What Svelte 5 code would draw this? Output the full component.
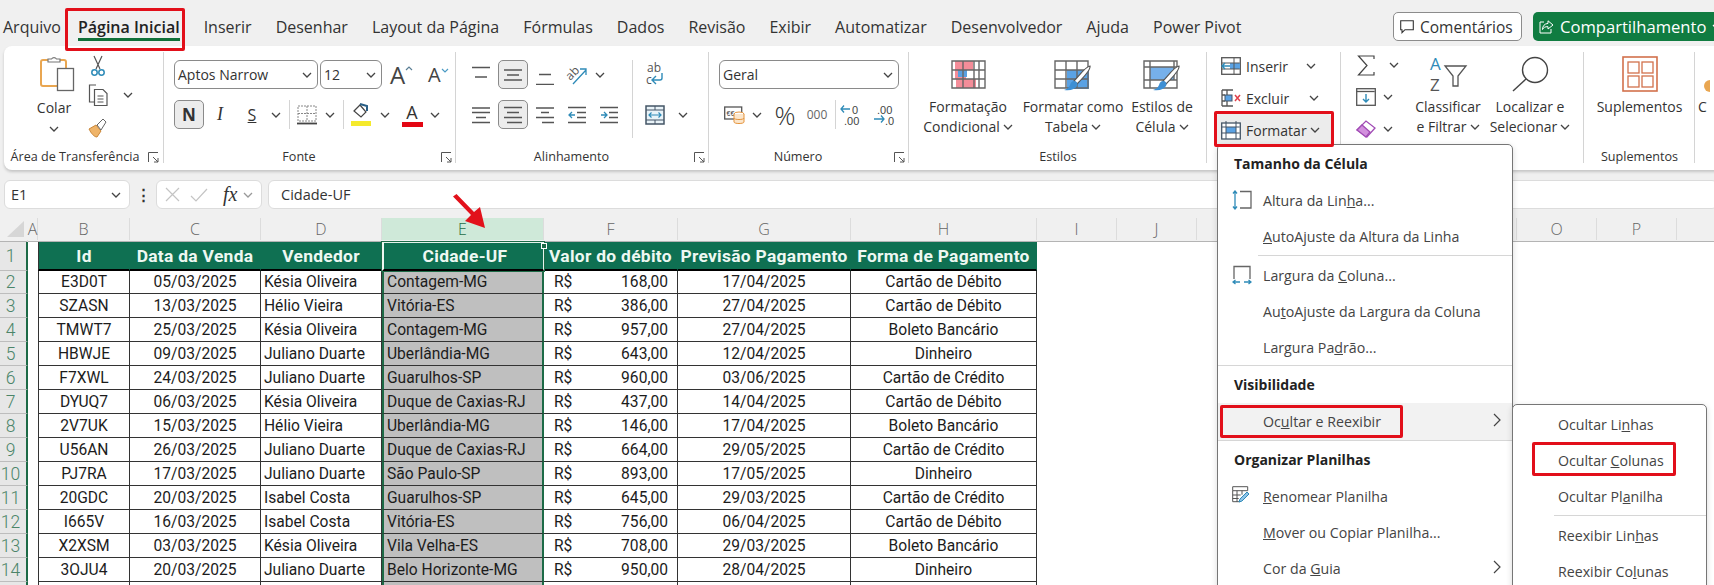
<script>
const tabs = ['Arquivo', 'Página Inicial', 'Inserir', 'Desenhar', 'Layout da Página', 'Fórmulas', 'Dados', 'Revisão', 'Exibir', 'Automatizar', 'Desenvolvedor', 'Ajuda', 'Power Pivot']
// K to N sit under the open menu
const letters = ['A', 'B', 'C', 'D', 'E', 'F', 'G', 'H', 'I', 'J', '', '', '', '', 'O', 'P', 'Q']
const heads = ['Id', 'Data da Venda', 'Vendedor', 'Cidade-UF', 'Valor do débito', 'Previsão Pagamento', 'Forma de Pagamento']
const rows = [
  ['E3D0T', '05/03/2025', 'Késia Oliveira', 'Contagem-MG', '168,00', '17/04/2025', 'Cartão de Débito'],
  ['SZASN', '13/03/2025', 'Hélio Vieira', 'Vitória-ES', '386,00', '27/04/2025', 'Cartão de Débito'],
  ['TMWT7', '25/03/2025', 'Késia Oliveira', 'Contagem-MG', '957,00', '27/04/2025', 'Boleto Bancário'],
  ['HBWJE', '09/03/2025', 'Juliano Duarte', 'Uberlândia-MG', '643,00', '12/04/2025', 'Dinheiro'],
  ['F7XWL', '24/03/2025', 'Juliano Duarte', 'Guarulhos-SP', '960,00', '03/06/2025', 'Cartão de Crédito'],
  ['DYUQ7', '06/03/2025', 'Késia Oliveira', 'Duque de Caxias-RJ', '437,00', '14/04/2025', 'Cartão de Débito'],
  ['2V7UK', '15/03/2025', 'Hélio Vieira', 'Uberlândia-MG', '146,00', '17/04/2025', 'Boleto Bancário'],
  ['U56AN', '26/03/2025', 'Juliano Duarte', 'Duque de Caxias-RJ', '664,00', '29/05/2025', 'Cartão de Crédito'],
  ['PJ7RA', '17/03/2025', 'Juliano Duarte', 'São Paulo-SP', '893,00', '17/05/2025', 'Dinheiro'],
  ['20GDC', '20/03/2025', 'Isabel Costa', 'Guarulhos-SP', '645,00', '29/03/2025', 'Cartão de Crédito'],
  ['I665V', '16/03/2025', 'Isabel Costa', 'Vitória-ES', '756,00', '06/04/2025', 'Cartão de Débito'],
  ['X2XSM', '03/03/2025', 'Késia Oliveira', 'Vila Velha-ES', '708,00', '29/03/2025', 'Boleto Bancário'],
  ['3OJU4', '20/03/2025', 'Juliano Duarte', 'Belo Horizonte-MG', '950,00', '28/04/2025', 'Dinheiro'],
]
</script>

{#snippet chev()}
  <svg class="chev" width="10" height="6" viewBox="0 0 10 6"><path d="M1 1l4 4 4-4" fill="none" stroke="#444" stroke-width="1.3"/></svg>
{/snippet}
{#snippet launcher()}
  <svg class="launch" width="11" height="11" viewBox="0 0 11 11"><path d="M.5 10V.5H10M5 5l5 5M10 6v4H6" fill="none" stroke="#555" stroke-width="1"/></svg>
{/snippet}
{#snippet lines(a, b, c, d)}
  <svg width="18" height="18" viewBox="0 0 18 18"><path d="M0 {a}h18M{b} 6.500h{18 - 2 * b}M{c} 11.500h{18 - 2 * c}M{d} 16.500h{18 - d}" stroke="#555" stroke-width="1.4"/></svg>
{/snippet}

<div class="page">
  <div class="tabs">
    {#each tabs as t, i}
      <span class="tab" class:on={i === 1}>{t}</span>
    {/each}
    <div class="actions">
      <button class="comments">
        <svg width="14" height="14" viewBox="0 0 14 14"><path d="M.7.7h12.600v9H5l-3 3v-3H.7z" fill="none" stroke="#333" stroke-width="1.100"/></svg>
        Comentários
      </button>
      <button class="share">
        <svg width="15" height="14" viewBox="0 0 15 14"><path d="M9 .8l5 4.200-5 4V6.700C6 6.500 4.500 7.500 3.500 9.500 3.500 6 5.500 3.700 9 3.400zM5 2H1v11h11V9" fill="none" stroke="#fff" stroke-width="1"/></svg>
        Compartilhamento
        {@render chev()}
      </button>
    </div>
  </div>

  <div class="ribbon">
    <section class="g g1">
      <div class="body clip">
        <div class="paste">
          <svg width="36" height="37" viewBox="0 0 36 37">
            <rect x="1" y="5" width="25" height="26" rx="2" fill="#fff" stroke="#e9a651" stroke-width="2"/>
            <path d="M8 7V4h3.500a3 3 0 0 1 5 0H20v3z" fill="#fff" stroke="#777" stroke-width="1.200"/>
            <rect x="17.500" y="13.500" width="16" height="22" fill="#fff" stroke="#666" stroke-width="1.300"/>
          </svg>
          <span>Colar</span>
          {@render chev()}
        </div>
        <div class="tools">
          <div class="tool scissors">
            <svg width="14" height="22" viewBox="0 0 14 22"><path d="M3 1l6 13M11 1L5 14" stroke="#555" stroke-width="1.200"/><circle cx="3.500" cy="17.500" r="2.700" fill="none" stroke="#2e8bb8" stroke-width="1.500"/><circle cx="10.500" cy="17.500" r="2.700" fill="none" stroke="#2e8bb8" stroke-width="1.500"/></svg>
          </div>
          <div class="tool copy">
            <svg width="20" height="22" viewBox="0 0 20 22"><path d="M8 1H1.500v17H6" fill="none" stroke="#555" stroke-width="1.200"/><path d="M6.500 5.500H15l4 4v12H6.500z" fill="#fff" stroke="#555" stroke-width="1.200"/><path d="M9.500 12h6M9.500 15h6M9.500 18h6" stroke="#555"/></svg>
            {@render chev()}
          </div>
          <div class="tool">
            <svg width="20" height="21" viewBox="0 0 20 21"><path d="M1 12l7-4 5 6-4 6C6 20 3 16 1 12z" fill="#efb469" stroke="#c9873a"/><path d="M9 8l6-6 3 3-5 8z" fill="#fff" stroke="#666"/></svg>
          </div>
        </div>
      </div>
      <div class="lbl">Área de Transferência</div>
      {@render launcher()}
    </section>

    <section class="g g2">
      <div class="body rows2">
        <div class="font-top">
          <div class="sel font-name"><span>Aptos Narrow</span>{@render chev()}</div>
          <div class="sel font-size"><span>12</span>{@render chev()}</div>
          <div class="grow">A<svg width="8" height="5" viewBox="0 0 8 5"><path d="M1 4l3-3 3 3" fill="none" stroke="#5b7f95" stroke-width="1.200"/></svg></div>
          <div class="shrink">A<svg width="8" height="5" viewBox="0 0 8 5"><path d="M1 1l3 3 3-3" fill="none" stroke="#4b9bc4" stroke-width="1.200"/></svg></div>
        </div>
        <div class="font-bot">
          <div class="tog bold">N</div>
          <div class="ital">I</div>
          <div class="und">S</div>
          {@render chev()}
          <i class="vsep"></i>
          <svg width="20" height="20" viewBox="0 0 20 20"><path d="M1 1h18v15H1zM10 1v15M1 8.500h18" fill="none" stroke="#888" stroke-width="1" stroke-dasharray="2 1"/><path d="M0 18.500h20" stroke="#444" stroke-width="1.800"/></svg>
          {@render chev()}
          <i class="vsep"></i>
          <svg width="21" height="23" viewBox="0 0 21 23"><path d="M3 8l6-6 6 7-5 5z" fill="#fff" stroke="#444" stroke-width="1.200"/><path d="M9 1l7 2v5" fill="none" stroke="#2a5f86" stroke-width="2"/><rect y="18" width="20" height="5" fill="#f5ea2c"/></svg>
          {@render chev()}
          <div class="color">A</div>
          {@render chev()}
        </div>
      </div>
      <div class="lbl">Fonte</div>
      {@render launcher()}
    </section>

    <section class="g g3">
      <div class="body align">
        <svg width="18" height="18" viewBox="0 0 18 18"><path d="M0 1.500h18M3 11h12" stroke="#555" stroke-width="1.400"/></svg>
        <div class="tog"><svg width="18" height="12" viewBox="0 0 18 12"><path d="M0 1h18M3 6h12M0 11h18" stroke="#555" stroke-width="1.400"/></svg></div>
        <svg width="18" height="20" viewBox="0 0 18 20"><path d="M3 9.500h12M0 19.500h18" stroke="#555" stroke-width="1.400"/></svg>
        <svg class="open" width="22" height="22" viewBox="0 0 22 22"><text x="0" y="13" class="mini" transform="rotate(-45 7 10)">ab</text><path d="M7 20L20 6M14 5h6v6" fill="none" stroke="#2e8bb8" stroke-width="1.300"/></svg>
        <div class="start">{@render chev()}</div>
        <i class="tall"></i>
        <svg class="open" width="20" height="26" viewBox="0 0 20 26"><text x="2" y="10" class="mini">ab</text><text x="1" y="22" class="mini">c</text><path d="M17 11v5a2 2 0 0 1-2 2H8m3-4l-4 4 4 4" fill="none" stroke="#2e8bb8" stroke-width="1.400"/></svg>
        <span></span>

        {@render lines(2, 0, 4, 0)}
        <div class="tog">{@render lines(1.500, 3, 0, 3)}</div>
        {@render lines(2, 5, 0, 6)}
        <svg width="18" height="18" viewBox="0 0 18 18"><path d="M0 1.500h18M9 6.500h9M9 11.500h9M0 16.500h18" stroke="#555" stroke-width="1.400"/><path d="M7 9H1m3-3L1 9l3 3" fill="none" stroke="#2e8bb8" stroke-width="1.300"/></svg>
        <svg width="18" height="18" viewBox="0 0 18 18"><path d="M0 1.500h18M9 6.500h9M9 11.500h9M0 16.500h18" stroke="#555" stroke-width="1.400"/><path d="M1 9h6M4 6l3 3-3 3" fill="none" stroke="#2e8bb8" stroke-width="1.300"/></svg>
        <svg width="20" height="20" viewBox="0 0 20 20"><rect x="1" y="1" width="18" height="18" fill="#e9f3f8" stroke="#456" stroke-width="1.500"/><path d="M1 5h18M1 15h18M10 1v4M10 15v4" stroke="#456"/><path d="M4 10h12M6.500 7.500L4 10l2.500 2.500M13.500 7.500L16 10l-2.500 2.500" fill="none" stroke="#2e8bb8" stroke-width="1.200"/></svg>
        {@render chev()}
      </div>
      <div class="lbl">Alinhamento</div>
      {@render launcher()}
    </section>

    <section class="g g4">
      <div class="body rows2">
        <div class="sel geral"><span>Geral</span>{@render chev()}</div>
        <div class="num-bot">
          <svg width="21" height="20" viewBox="0 0 21 20"><rect x=".7" y="2" width="17" height="12" fill="#fff" stroke="#555" stroke-width="1.300"/><text x="2.500" y="11" class="micro">€€</text><ellipse cx="15" cy="9" rx="5" ry="2" fill="#fff" stroke="#e5933a"/><path d="M10 9v8c0 2 10 2 10 0V9M10 13c0 2 10 2 10 0" fill="#fbe6cc" stroke="#e5933a"/></svg>
          {@render chev()}
          <span class="pct">%</span>
          <span class="mil">000</span>
          <i class="vsep"></i>
          <svg width="22" height="22" viewBox="0 0 22 22"><path d="M10 5H1m3-3.500L1 5l3 3.500" fill="none" stroke="#2e8bb8" stroke-width="1.300"/><text x="12" y="10" class="micro2">0</text><text x="4" y="21" class="micro2">.00</text></svg>
          <svg width="22" height="22" viewBox="0 0 22 22"><text x="4" y="10" class="micro2">.00</text><path d="M1 15h10M8 11.500l3 3.500-3 3.500" fill="none" stroke="#2e8bb8" stroke-width="1.300"/><text x="12" y="21" class="micro2">.0</text></svg>
        </div>
      </div>
      <div class="lbl">Número</div>
      {@render launcher()}
    </section>

    <section class="g g5">
      <div class="body styles">
        <div class="big s1">
          <div class="ico">
            <svg width="35" height="29" viewBox="0 0 35 29"><path d="M4 1h18v9H15v9h-7v0H4z" fill="#f48d99"/><path d="M7 10h9v7H7z" fill="#5a9fe0"/><path d="M5 19h20v9H5z" fill="#f48d99"/><path d="M1 1h33v27H1zM1 10h33M1 19h33M12 1v27M23 1v27M28 1v27" fill="none" stroke="#666" stroke-width="1.400"/></svg>
          </div>
          <span>Formatação</span><span>Condicional {@render chev()}</span>
        </div>
        <div class="big s2">
          <div class="ico">
            <svg width="38" height="34" viewBox="0 0 38 34"><path d="M13 10h22v19H13z" fill="#5aa2e4"/><path d="M1 1h33v27H1zM1 10h33M1 19h33M12 1v27M23 1v27" fill="none" stroke="#666" stroke-width="1.400"/><path d="M36 6c1 4-9 14-13 18l-3-3C24 17 32 6 36 6z" fill="#fff" stroke="#555" stroke-width="1.200"/><path d="M20 21c3 0 4 3 3 5-2 3-6 5-13 4 4-1 5-3 6-5 1-3 2-4 4-4z" fill="#3d8fd4"/></svg>
          </div>
          <span>Formatar como</span><span>Tabela {@render chev()}</span>
        </div>
        <div class="big s3">
          <div class="ico">
            <svg width="38" height="34" viewBox="0 0 38 34"><path d="M7 7h24v13H7z" fill="#76b0ea"/><path d="M1 1h33v27H1zM1 7h33M1 20h33M7 1v27M31 1v19" fill="none" stroke="#666" stroke-width="1.400"/><path d="M36 6c1 4-9 14-13 18l-3-3C24 17 32 6 36 6z" fill="#fff" stroke="#555" stroke-width="1.200"/><path d="M20 21c3 0 4 3 3 5-2 3-6 5-13 4 4-1 5-3 6-5 1-3 2-4 4-4z" fill="#3d8fd4"/></svg>
          </div>
          <span>Estilos de</span><span>Célula {@render chev()}</span>
        </div>
      </div>
      <div class="lbl">Estilos</div>
    </section>

    <section class="g g6">
      <div class="body cells">
        <div class="cell-row ins">
          <svg width="20" height="18" viewBox="0 0 20 18"><rect x=".7" y=".7" width="18.600" height="16.600" fill="#fff" stroke="#555" stroke-width="1.300"/><rect x="9" y="6" width="10" height="6" fill="#5aa2e4"/><path d="M.7 6h18M.7 12h18M13 1v16" stroke="#555"/><path d="M9 9H1m3-3L1 9l3 3" fill="none" stroke="#2e8bb8" stroke-width="1.500"/></svg>
          <span>Inserir</span>{@render chev()}
        </div>
        <div class="cell-row exc">
          <svg width="20" height="18" viewBox="0 0 20 18"><path d="M1 1h11M1 17h11M1 1v16M6 1v5M6 12v5M1 6h3M1 12h3" fill="none" stroke="#555" stroke-width="1.300"/><rect x="4" y="6" width="7" height="6" fill="#5aa2e4" stroke="#456"/><path d="M14 6l5 6M19 6l-5 6" stroke="#e0404a" stroke-width="1.500"/></svg>
          <span>Excluir</span>{@render chev()}
        </div>
        <div class="cell-row fmt">
          <svg width="20" height="20" viewBox="0 0 20 20"><rect x=".7" y="3" width="18.600" height="16" fill="#fff" stroke="#456" stroke-width="1.300"/><rect x="5" y="7" width="10" height="6" fill="#5aa2e4"/><path d="M.7 7h18M.7 13h18M5 1v18M15 1v18" stroke="#456"/></svg>
          <span>Formatar</span>{@render chev()}
        </div>
      </div>
    </section>

    <section class="g g7">
      <div class="body edit">
        <div class="tools small">
          <div class="tool sum">
            <svg width="18" height="21" viewBox="0 0 18 21"><path d="M17 4V1H1.500L10 10.500 1.500 20H17v-3" fill="none" stroke="#444" stroke-width="1.200"/></svg>
            {@render chev()}
          </div>
          <div class="tool">
            <svg width="20" height="18" viewBox="0 0 20 18"><rect x=".7" y=".7" width="18.600" height="16.600" fill="#fff" stroke="#555" stroke-width="1.300"/><path d="M.7 3.500h18" stroke="#555" stroke-width="1.300"/><path d="M10 6v8M7 11l3 3 3-3" fill="none" stroke="#2e8bb8" stroke-width="1.400"/></svg>
            {@render chev()}
          </div>
          <div class="tool">
            <svg width="20" height="20" viewBox="0 0 20 20"><path d="M1 11L10 2l9 7-8 9z" fill="#fff" stroke="#a14bb5" stroke-width="1.300"/><path d="M1 11l5-5 8 7-4 5z" fill="#d290dd" stroke="#a14bb5" stroke-width="1.300"/></svg>
            {@render chev()}
          </div>
        </div>
        <div class="big sort">
          <div class="ico">
            <svg class="open" width="37" height="38" viewBox="0 0 37 38"><text x="0" y="14" class="az blue">A</text><text x="0" y="35" class="az">Z</text><path d="M15 10h21l-8 10v10h-5V20z" fill="#fff" stroke="#555" stroke-width="1.300"/></svg>
          </div>
          <span>Classificar</span><span>e Filtrar {@render chev()}</span>
        </div>
        <div class="big find">
          <div class="ico">
            <svg width="37" height="36" viewBox="0 0 37 36"><circle cx="23" cy="14" r="12.500" fill="none" stroke="#444" stroke-width="1.400"/><path d="M14 23L1 35" stroke="#444" stroke-width="1.400"/></svg>
          </div>
          <span>Localizar e</span><span>Selecionar {@render chev()}</span>
        </div>
      </div>
    </section>

    <section class="g g8">
      <div class="body addins">
        <div class="big">
          <div class="ico">
            <svg width="36" height="36" viewBox="0 0 36 36"><rect x="1" y="1" width="34" height="34" fill="none" stroke="#d2714c" stroke-width="1.600"/><rect x="6" y="6" width="11" height="11" fill="none" stroke="#d2714c" stroke-width="1.300"/><rect x="20" y="6" width="11" height="11" fill="none" stroke="#d2714c" stroke-width="1.300"/><rect x="6" y="20" width="11" height="11" fill="none" stroke="#d2714c" stroke-width="1.300"/><rect x="20" y="20" width="11" height="11" fill="none" stroke="#d2714c" stroke-width="1.300"/></svg>
          </div>
          <span>Suplementos</span>
        </div>
      </div>
      <div class="lbl">Suplementos</div>
    </section>

    <section class="g g9">
      <div class="body addins">
        <div class="big left">
          <div class="ico"><svg class="peek" width="6" height="12" viewBox="0 0 6 12"><path d="M6 0a6 6 0 0 0 0 12z" fill="#e9a651"/></svg></div>
          <span>C</span>
        </div>
      </div>
    </section>
  </div>

  <div class="formula">
    <div class="fbox name"><span>E1</span>{@render chev()}</div>
    <div class="dots">⋮</div>
    <div class="fbox fx">
      <svg width="15" height="15" viewBox="0 0 15 15"><path d="M1 1l13 13M14 1L1 14" stroke="#c4c4c4" stroke-width="1.200"/></svg>
      <svg width="18" height="14" viewBox="0 0 18 14"><path d="M1 8l5 5L17 1" fill="none" stroke="#c4c4c4" stroke-width="1.200"/></svg>
      <em>fx</em>
      {@render chev()}
    </div>
    <div class="fbox input">Cidade-UF</div>
  </div>

  <div class="sheet">
    <div class="cols">
      <div class="corner"><svg width="17" height="16" viewBox="0 0 17 16"><path d="M17 0v16H0z" fill="#d6d6d6"/></svg></div>
      {#each letters as l, i}
        <div class="col" class:sel-col={l === 'E'}>{l}</div>
      {/each}
    </div>

    <div class="row hd">
      <div class="rn">1</div><div class="a"></div>
      {#each heads as h, i}
        <div class="c th" class:e={i === 3}>{h}</div>
      {/each}
    </div>
    {#each rows as r, n}
      <div class="row">
        <div class="rn">{n + 2}</div><div class="a"></div>
        <div class="c">{r[0]}</div>
        <div class="c">{r[1]}</div>
        <div class="c left">{r[2]}</div>
        <div class="c left e">{r[3]}</div>
        <div class="c money"><span>R$</span><span>{r[4]}</span></div>
        <div class="c">{r[5]}</div>
        <div class="c">{r[6]}</div>
      </div>
    {/each}
    <div class="row">
      <div class="rn"></div><div class="a"></div>
      <div class="c"></div><div class="c"></div><div class="c"></div><div class="c e"></div><div class="c"></div><div class="c"></div><div class="c"></div>
    </div>
  </div>

  <div class="menu main">
    <div class="mh">Tamanho da Célula</div>
    <div class="mi">
      <span class="mico"><svg width="20" height="20" viewBox="0 0 20 20"><path d="M8 1.500h11v16.500H8" fill="none" stroke="#666" stroke-width="1.300"/><path d="M3 1v18M1 3.500L3 1l2 2.500M1 16.500L3 19l2-2.500" fill="none" stroke="#2e8bb8" stroke-width="1.300"/></svg></span>
      <span>Altura da Lin<u>h</u>a...</span>
    </div>
    <div class="mi"><span><u>A</u>utoAjuste da Altura da Linha</span></div>
    <div class="ms in"></div>
    <div class="mi">
      <span class="mico"><svg width="20" height="20" viewBox="0 0 20 20"><path d="M2 14V1.500h16V14" fill="none" stroke="#666" stroke-width="1.300"/><path d="M1 17h7M3.500 15L1 17l2.500 2M19 17h-7M16.500 15L19 17l-2.500 2" fill="none" stroke="#2e8bb8" stroke-width="1.300"/></svg></span>
      <span>Largura da <u>C</u>oluna...</span>
    </div>
    <div class="mi"><span>Au<u>t</u>oAjuste da Largura da Coluna</span></div>
    <div class="mi"><span>Largura Pa<u>d</u>rão...</span></div>
    <div class="ms tight"></div>
    <div class="mh">Visibilidade</div>
    <div class="mi hov"><span>Oc<u>u</u>ltar e Reexibir</span><svg class="arrow" width="8" height="14" viewBox="0 0 8 14"><path d="M1 1l6 6-6 6" fill="none" stroke="#444" stroke-width="1.200"/></svg></div>
    <div class="ms tight"></div>
    <div class="mh">Organizar Planilhas</div>
    <div class="mi">
      <span class="mico"><svg width="17" height="17" viewBox="0 0 17 17"><path d="M.7 .7h15v4H.7zM.7 4.700v11h7M.7 9h8M.7 12.500h6M5 4.700V16M10 4.700v4" fill="none" stroke="#555"/><path d="M7 16l1-3 7-7 2 2-7 7z" fill="#8fc3e8" stroke="#2e8bb8"/></svg></span>
      <span><u>R</u>enomear Planilha</span>
    </div>
    <div class="mi"><span><u>M</u>over ou Copiar Planilha...</span></div>
    <div class="mi"><span>Cor da <u>G</u>uia</span><svg class="arrow" width="8" height="14" viewBox="0 0 8 14"><path d="M1 1l6 6-6 6" fill="none" stroke="#444" stroke-width="1.200"/></svg></div>
  </div>

  <div class="menu sub">
    <div class="mi"><span>Ocultar Li<u>n</u>has</span></div>
    <div class="mi"><span>Ocultar <u>C</u>olunas</span></div>
    <div class="mi"><span>Ocultar Pl<u>a</u>nilha</span></div>
    <div class="ms in2"></div>
    <div class="mi"><span>Reexibir Lin<u>h</u>as</span></div>
    <div class="mi"><span>Reexibir Co<u>l</u>unas</span></div>
  </div>

  <div class="mark m-tab"></div>
  <div class="mark m-fmt"></div>
  <div class="mark m-hide"></div>
  <div class="mark m-cols"></div>
  <svg class="red-arrow" width="34" height="36" viewBox="0 0 34 36"><path d="M0 2.500L3.500 0 21 18l6-5 5 21-20-7 6-6z" fill="#e2111b"/></svg>
</div>

<style>
:global(body) {
  margin: 0;
  overflow: hidden;
}
.page {
  position: relative;
  width: 1714px;
  height: 585px;
  overflow: hidden;
  background: #f0f0f0;
  font-family: "Open Sans", "Liberation Sans", sans-serif;
  color: #333;
}
svg {
  display: block;
  flex: none;
}
svg.open {
  overflow: visible;
}
.tabs {
  height: 46px;
  box-sizing: border-box;
  padding: 8px 0 0 3px;
  display: flex;
  align-items: center;
  gap: 24px;
  font-size: 16px;
  white-space: nowrap;
}
.tab {
  position: relative;
}
.tab.on {
  font-weight: 600;
  color: #222;
  margin-left: -7px;
}
.tab.on::after {
  content: "";
  position: absolute;
  left: 0;
  right: 0;
  bottom: -3px;
  height: 3px;
  background: #0f7039;
}
.actions {
  margin-left: auto;
  margin-top: -1px;
  margin-right: -9px;
  display: flex;
  gap: 11px;
}
.actions button {
  height: 29px;
  padding: 0 0 0 6px;
  display: flex;
  align-items: center;
  gap: 6px;
  font: inherit;
  font-size: 15.5px;
  border-radius: 5px;
}
.comments {
  width: 129px;
  background: #fff;
  border: 1px solid #8c8c8c;
  color: #333;
}
.actions .share {
  width: 190px;
  background: #107c41;
  border: 0;
  color: #fff;
  font-size: 16.6px;
}
.share :global(.chev path) {
  stroke: #fff;
}

.ribbon {
  display: flex;
  height: 124px;
  margin: 0 -12px 0 4px;
  background: #fff;
  border-radius: 8px;
  box-shadow: 0 2px 3px rgba(0, 0, 0, 0.18);
  font-size: 14px;
}
.g {
  position: relative;
  flex: none;
  box-sizing: border-box;
  display: flex;
  flex-direction: column;
}
.g::after {
  content: "";
  position: absolute;
  top: 6px;
  bottom: 7px;
  right: 0;
  width: 1px;
  background: #d4d4d4;
}
.g1 { width: 160px; }
.g2 { width: 292px; }
.g3 { width: 253px; }
.g4 { width: 200px; }
.g5 { width: 298px; }
.g6 { width: 134px; }
.g7 { width: 243px; }
.g8 { width: 111px; }
.g9 { width: 60px; }
.body {
  height: 101px;
  box-sizing: border-box;
}
.lbl {
  height: 20px;
  line-height: 20px;
  text-align: center;
  font-size: 12.6px;
  padding-right: 22px;
  white-space: nowrap;
}
.g1 .lbl { padding-right: 18px; }
.g5 .lbl, .g8 .lbl { padding-right: 0; }
.launch {
  position: absolute;
  right: 4px;
  bottom: 7px;
}
.g1 .launch { right: 5px; }

.clip {
  display: flex;
  padding: 11px 0 0 26px;
}
.paste {
  width: 48px;
  margin-right: 8px;
  display: flex;
  flex-direction: column;
  align-items: center;
  font-size: 14px;
  margin-top: -2px;
}
.paste svg:first-child {
  margin-left: 8px;
}
.paste span {
  margin: 6px 0 8px;
  line-height: 20px;
}
.tools {
  width: 60px;
  flex: none;
  margin-top: -10px;
}
.tool {
  height: 32px;
  display: flex;
  align-items: center;
  justify-content: flex-start;
  gap: 18px;
  padding-left: 2px;
}
.tool.scissors svg {
  margin: 6px 0 0 3px;
}
.tool.copy {
  gap: 15px;
}

.rows2 {
  padding: 14px 0 0 10px;
  display: flex;
  flex-direction: column;
  gap: 11px;
}
.sel {
  height: 29px;
  box-sizing: border-box;
  border: 1px solid #8a8a8a;
  border-radius: 6px;
  display: flex;
  align-items: center;
  justify-content: space-between;
  padding: 0 5px 0 3px;
  font-size: 14px;
}
.font-top {
  display: flex;
  align-items: center;
}
.font-name { width: 144px; }
.font-size { width: 62px; margin-left: 2px; }
.grow, .shrink {
  display: flex;
  align-items: flex-start;
  color: #444;
  line-height: 1;
}
.grow {
  font-size: 24px;
  margin-left: 8px;
  width: 38px;
}
.shrink {
  font-size: 20px;
  width: 26px;
}
.grow svg, .shrink svg { margin-top: 3px; }
.font-bot {
  height: 29px;
  display: grid;
  grid-template-columns: 30px 32px 32px 16px 10px 26px 20px 6px 30px 18px 36px 10px;
  align-items: center;
  justify-items: center;
}
.tog {
  width: 30px;
  height: 29px;
  box-sizing: border-box;
  background: #ececec;
  border: 1px solid #8a8a8a;
  border-radius: 5px;
  display: flex;
  align-items: center;
  justify-content: center;
}
.bold {
  font-weight: 700;
  font-size: 17px;
  color: #333;
}
.ital {
  font: italic 18px "Liberation Serif", serif;
}
.und {
  font-size: 16px;
  text-decoration: underline;
}
.vsep {
  width: 1px;
  height: 29px;
  background: #d4d4d4;
}
.color {
  width: 21px;
  text-align: center;
  font-size: 18px;
  line-height: 19px;
  border-bottom: 5px solid #e30613;
}
.align {
  padding: 14px 0 0 11px;
  display: grid;
  grid-template-columns: 28px 36px 28px 36px 28px 18px 28px 28px;
  grid-template-rows: 29px 29px;
  row-gap: 11px;
  align-items: center;
  justify-items: center;
}
.start { justify-self: start; }
.tall {
  grid-row: 1 / 3;
  grid-column: 6;
  width: 1px;
  height: 78px;
  align-self: start;
  background: #d4d4d4;
}
.mini {
  font-size: 12px;
  fill: #555;
  font-family: "Open Sans", sans-serif;
}
.micro {
  font-size: 7px;
  fill: #444;
  font-family: "Liberation Sans", sans-serif;
}
.micro2 {
  font-size: 11px;
  fill: #444;
  font-family: "Liberation Sans", sans-serif;
}
.geral {
  width: 180px;
  font-size: 14px;
}
.num-bot {
  height: 29px;
  display: grid;
  grid-template-columns: 30px 16px 40px 24px 12px 20px 46px;
  align-items: center;
  justify-items: center;
}
.pct {
  font-size: 26px;
  font-weight: 300;
  line-height: 1;
}
.mil {
  font-size: 12px;
  color: #666;
}

.big {
  display: flex;
  flex-direction: column;
  align-items: center;
  flex: none;
  line-height: 20px;
  white-space: nowrap;
}
.big span {
  display: flex;
  align-items: center;
  gap: 3px;
}
.ico {
  height: 37px;
}
.styles {
  display: flex;
  padding: 14px 0 0 10px;
  gap: 5px;
}
.s1 { width: 98px; }
.s2 { width: 102px; }
.s3 { width: 66px; }
.cells {
  padding: 4px 0 0 14px;
}
.cell-row {
  height: 32px;
  display: grid;
  grid-template-columns: 25px 64px 10px;
  align-items: center;
  font-size: 14px;
}
.cell-row.ins :global(.chev) {
  margin-left: -4px;
}
.cell-row.exc :global(.chev) {
  margin-left: -1px;
}
.fmt {
  position: relative;
}
.fmt::before {
  content: "";
  position: absolute;
  left: -5px;
  width: 115px;
  top: 0;
  bottom: 0;
  background: #ececec;
  border-radius: 3px;
}
.fmt > :global(*) {
  position: relative;
}
.edit {
  display: flex;
  padding: 0 0 0 15px;
}
.tools.small {
  margin-top: 3px;
  width: 46px;
}
.tools.small .tool {
  padding-left: 0;
  gap: 7px;
}
.tools.small .tool.sum {
  padding-left: 1px;
  gap: 14px;
}
.edit .big, .addins .big {
  padding-top: 10px;
}
.edit .ico, .addins .ico {
  height: 41px;
}
.sort { width: 92px; }
.find { width: 72px; }
.az {
  font-size: 17px;
  fill: #555;
  font-family: "Open Sans", sans-serif;
}
.az.blue { fill: #2e8bb8; }
.addins {
  display: flex;
  justify-content: center;
}
.left {
  width: 100%;
  box-sizing: border-box;
  align-items: flex-start;
  padding-left: 21px;
}
.peek {
  margin: 24px 0 0 6px;
}

.formula {
  margin-top: 10px;
  height: 29px;
  display: flex;
  align-items: stretch;
  padding-left: 4px;
  font-size: 14.5px;
}
.fbox {
  box-sizing: border-box;
  background: #fff;
  border: 1px solid #dcdcdc;
  border-radius: 6px;
  display: flex;
  align-items: center;
}
.name {
  width: 126px;
  padding: 0 8px 0 6px;
  justify-content: space-between;
}
.dots {
  width: 26px;
  text-align: center;
  line-height: 29px;
  font-weight: 700;
}
.fx {
  width: 106px;
  padding-left: 8px;
  gap: 10px;
}
.fx em {
  font: italic 20px "Liberation Serif", serif;
  margin-left: 5px;
  margin-right: -4px;
}
.fx :global(.chev path) {
  stroke: #999;
}
.input {
  flex: 1;
  margin-left: 6px;
  padding-left: 12px;
  margin-right: -4px;
}

.sheet {
  --cols: 28px 10px 92px 131px 121px 162px 134px 173px 186px;
  margin-top: 9px;
  background: #fff;
  font: 15.6px Roboto, "Liberation Sans", sans-serif;
  color: #1c1c1c;
}
.cols {
  height: 24px;
  display: grid;
  grid-template-columns: 28px 10px 92px 131px 121px 162px 134px 173px 186px repeat(8, 80px);
  background: #f0f0f0;
  border-bottom: 1px solid #b4b4b4;
  box-sizing: border-box;
  font: 300 16px "Open Sans", sans-serif;
  color: #666;
}
.corner {
  display: flex;
  justify-content: flex-end;
  align-items: flex-end;
  padding: 0 4px 3px 0;
}
.col {
  display: flex;
  align-items: center;
  justify-content: center;
  border-right: 1px solid #dcdcdc;
  white-space: nowrap;
}
.sel-col {
  background: #cfe9d9;
  color: #1f6d47;
}
.row {
  height: 24px;
  display: grid;
  grid-template-columns: var(--cols);
}
.row.hd {
  height: 29px;
}
.row:nth-child(3) {
  height: 23px;
}
.rn {
  background: #e7e7e7;
  border-right: 2px solid #1d6b47;
  border-bottom: 1px solid #bdbdbd;
  box-sizing: border-box;
  display: flex;
  align-items: center;
  justify-content: center;
  padding-right: 5px;
  color: #4b8569;
  font-size: 17.5px;
  font-weight: 300;
}
.c {
  box-sizing: border-box;
  border-right: 1px solid #333;
  border-bottom: 1px solid #333;
  display: flex;
  align-items: center;
  justify-content: center;
  white-space: nowrap;
  min-width: 0;
}
.a + .c {
  border-left: 1px solid #333;
}
.left {
  justify-content: flex-start;
  padding-left: 3px;
}
.e {
  background: #bfbfbf;
  border-left: 2px solid #1d6b47;
  border-right: 2px solid #1d6b47;
  padding-left: 3px;
  justify-content: flex-start;
}
.money {
  justify-content: space-between;
  padding: 0 9px 0 10px;
}
.th {
  background: #0f7052;
  color: #eef8f2;
  font-weight: 700;
  font-size: 17.4px;
  letter-spacing: 0.3px;
  border-right: 1px solid #0f7052;
  border-bottom: 2px solid #000;
}
.th.e {
  position: relative;
  background: #0f7052;
  justify-content: center;
  border: 1px solid #e6f2ec;
  border-left: 2px solid #eef6f1;
  border-bottom: 2px solid #000;
  outline: 1px solid #1d6b47;
}
.th.e::after {
  content: "";
  position: absolute;
  right: -4px;
  top: 0;
  width: 4px;
  height: 4px;
  background: #1d6b47;
  border: 1px solid #fff;
}

.menu {
  position: absolute;
  box-sizing: border-box;
  background: #fff;
  border: 1px solid #767676;
  border-radius: 5px 5px 0 0;
  box-shadow: 0 2px 6px rgba(0, 0, 0, 0.15);
  font-size: 14.2px;
  color: #444;
  white-space: nowrap;
}
.main {
  left: 1217px;
  top: 144px;
  width: 296px;
  height: 460px;
  padding-top: 1px;
}
.sub {
  left: 1512px;
  top: 404px;
  width: 195px;
  height: 200px;
  padding-top: 1px;
}
.mh {
  height: 36px;
  line-height: 36px;
  padding-left: 16px;
  font-weight: 700;
  font-size: 14px;
  color: #222;
}
.mi {
  position: relative;
  height: 36px;
  display: flex;
  align-items: center;
  padding-left: 45px;
}
.mico {
  position: absolute;
  left: 14px;
  top: 8px;
}
.arrow {
  position: absolute;
  right: 11px;
  top: 10px;
}
.hov {
  background: #f2f2f2;
  height: 37px;
}
.ms {
  height: 3px;
  position: relative;
}
.ms::after {
  content: "";
  position: absolute;
  left: 0;
  right: 0;
  top: 1px;
  height: 1px;
  background: #d6d6d6;
}
.ms.tight {
  height: 2px;
}
.ms.tight::after {
  top: 0;
}
.ms.in::after { left: 40px; }
.ms.in2::after { left: 41px; }
.mark {
  position: absolute;
  box-sizing: border-box;
  border: 3px solid #e20f1a;
  border-radius: 2px;
}
.m-tab { left: 65px; top: 8px; width: 120px; height: 43px; }
.m-fmt { left: 1214px; top: 111px; width: 120px; height: 36px; }
.m-hide { left: 1220px; top: 405px; width: 183px; height: 33px; }
.m-cols { left: 1532px; top: 442px; width: 144px; height: 34px; }
.red-arrow {
  position: absolute;
  left: 453px;
  top: 194px;
}
</style>
